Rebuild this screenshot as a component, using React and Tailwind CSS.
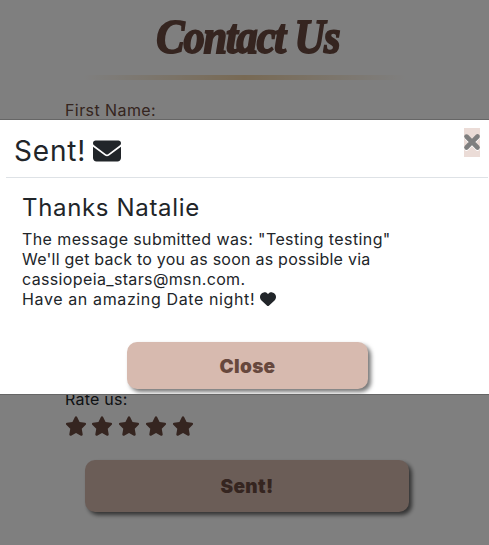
import { FaEnvelope, FaHeart, FaStar, FaXmark } from 'react-icons/fa6';

function ContactPage() {
  return (
    <main className="flex h-[545px] flex-col bg-white text-[#6b4a40]">
      <h1 className="flex h-[75px] items-center justify-center pb-0.5 pl-[6px] font-['Liberation_Serif',serif] text-[49px] leading-none font-bold italic">
        <span className="inline-block origin-center scale-x-[0.865] whitespace-nowrap tracking-[-1.3px] [-webkit-text-stroke:2px_#6b4a40]">Contact Us</span>
      </h1>
      <div className="mx-auto h-[5px] w-[325px] bg-[linear-gradient(90deg,transparent,#f0d3a8_50%,transparent)]" />
      <div className="h-[309px] pt-[18px] pl-[65px] text-base leading-6">
        <span className="tracking-[0.42px]">First Name:</span>
      </div>
      <div className="-mt-0.5 pl-[65px] text-base leading-6 tracking-[0.25px] text-[#212529]">Rate us:</div>
      <div className="mt-[5px] flex gap-[4.8px] pl-[64.5px]">
        {[1, 2, 3, 4, 5].map((n) => (
          <FaStar key={n} className="h-5 w-[22px]" />
        ))}
      </div>
      <button className="mt-6 ml-[85px] h-[52px] w-[324px] shrink-0 rounded-[10px] bg-[#d7baaf] pt-0.5 text-[19px] font-black tracking-[0.3px] shadow-[3px_3px_4px_#666]">
        Sent!
      </button>
    </main>
  );
}

function SentDialog() {
  return (
    <section className="absolute top-[120px] left-0 h-[274px] w-full bg-white text-[#212529] outline outline-[#666]">
      <header className="mr-px ml-1.5 flex h-[58px] justify-between border-b border-[#dee2e6] pr-2 pl-2">
        <h2 className="flex items-center gap-[7px] pt-1 text-[28px]">
          <span className="tracking-[0.8px]">Sent!</span>
          <FaEnvelope className="size-7" />
        </h2>
        <button className="mt-2 flex h-[29px] w-4 items-center justify-center bg-[#ebdcd7] text-[#7f7f7f]">
          <FaXmark className="size-[22px] shrink-0 -translate-y-px stroke-current stroke-[44px] drop-shadow-[0_1px_0_#fff]" />
        </button>
      </header>
      <div className="px-[22px] pt-[15px]">
        <h3 className="text-2xl leading-[29px] tracking-[0.66px]">Thanks Natalie</h3>
        <p className="mt-[7px] text-base leading-5">
          <span className="block tracking-[0.4px]">The message submitted was: "Testing testing"</span>
          <span className="block tracking-[0.24px]">We'll get back to you as soon as possible via</span>
          <span className="block tracking-[0.36px]">cassiopeia_stars@msn.com.</span>
          <span className="flex items-center gap-[5px] tracking-[0.62px]">
            Have an amazing Date night! <FaHeart className="size-4" />
          </span>
        </p>
      </div>
      <button className="mt-[33px] ml-[127px] block h-[47px] w-[241px] rounded-[10px] bg-[#d7baaf] pt-[3px] text-[19px] font-black tracking-[0.3px] text-[#67483d] shadow-[3px_3px_4px_#777]">
        Close
      </button>
    </section>
  );
}

export default function App() {
  return (
    <div className="relative h-[545px] w-[489px] overflow-hidden font-[Inter,sans-serif]">
      <ContactPage />
      <div className="absolute inset-0 bg-black/50" />
      <SentDialog />
    </div>
  );
}
